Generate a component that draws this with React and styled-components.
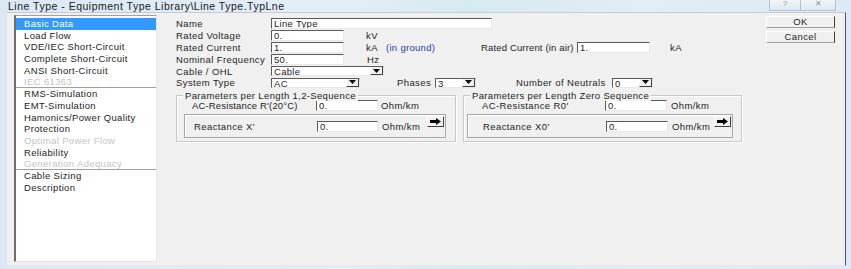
import styled, { createGlobalStyle } from "styled-components";

const GlobalStyle = createGlobalStyle`
  html, body { margin: 0; padding: 0; background: #dfeaf4; }
  body { font-family: "Liberation Sans", Arial, sans-serif; }
`;

const NAV_ITEMS = [
  { label: "Basic Data", selected: true },
  { label: "Load Flow" },
  { label: "VDE/IEC Short-Circuit" },
  { label: "Complete Short-Circuit" },
  { label: "ANSI Short-Circuit" },
  { label: "IEC 61363", disabled: true, divider: true },
  { label: "RMS-Simulation" },
  { label: "EMT-Simulation" },
  { label: "Hamonics/Power Quality" },
  { label: "Protection" },
  { label: "Optimal Power Flow", disabled: true },
  { label: "Reliability" },
  { label: "Generation Adequacy", disabled: true, divider: true },
  { label: "Cable Sizing" },
  { label: "Description" },
];

const App = () => {
  return (
    <>
      <GlobalStyle />
      <Window>
        <TitleBar>
          <Title>Line Type - Equipment Type Library\Line Type.TypLne</Title>
          <CaptionButtons>
            <CaptionButton w={32}>?</CaptionButton>
            <CaptionButton w={36}>✕</CaptionButton>
          </CaptionButtons>
        </TitleBar>
        <Frame>
          <Body>
            <Sidebar>
              {NAV_ITEMS.map((item) => (
                <NavItem
                  key={item.label}
                  selected={item.selected}
                  disabled={item.disabled}
                  divider={item.divider}
                >
                  {item.label}
                </NavItem>
              ))}
            </Sidebar>

            <Form>
              <Row>
                <Label w={95}>Name</Label>
                <Field w={221}>Line Type</Field>
              </Row>
              <Row>
                <Label w={95}>Rated Voltage</Label>
                <Field w={73}>0.</Field>
                <Unit ml={22}>kV</Unit>
              </Row>
              <Row>
                <Label w={95}>Rated Current</Label>
                <Field w={73}>1.</Field>
                <Unit ml={22} w={20}>kA</Unit>
                <Note w={95}>(in ground)</Note>
                <Label w={96} tight>Rated Current (in air)</Label>
                <Field w={73}>1.</Field>
                <Unit ml={20}>kA</Unit>
              </Row>
              <Row>
                <Label w={95}>Nominal Frequency</Label>
                <Field w={73}>50.</Field>
                <Unit ml={23}>Hz</Unit>
              </Row>
              <Row>
                <Label w={95}>Cable / OHL</Label>
                <Combo w={113}>
                  <ComboText>Cable</ComboText>
                  <DropButton>
                    <Caret />
                  </DropButton>
                </Combo>
              </Row>
              <Row>
                <Label w={95}>System Type</Label>
                <Combo w={89}>
                  <ComboText>AC</ComboText>
                  <DropButton>
                    <Caret />
                  </DropButton>
                </Combo>
                <Label w={38} ml={37}>Phases</Label>
                <Combo w={41}>
                  <ComboText>3</ComboText>
                  <DropButton>
                    <Caret />
                  </DropButton>
                </Combo>
                <Label w={96} ml={40}>Number of Neutrals</Label>
                <Combo w={41}>
                  <ComboText>0</ComboText>
                  <DropButton>
                    <Caret />
                  </DropButton>
                </Combo>
              </Row>

              <Groups>
                <Group w={280}>
                  <Legend>Parameters per Length 1,2-Sequence</Legend>
                  <GroupRow pl={15}>
                    <Label w={124} tight>AC-Resistance R'(20°C)</Label>
                    <Field w={62}>0.</Field>
                    <Unit ml={3}>Ohm/km</Unit>
                  </GroupRow>
                  <Inset ml={7} w={262}>
                    <GroupRow pl={9}>
                      <Label w={123}>Reactance X'</Label>
                      <Field w={61}>0.</Field>
                      <Unit ml={4}>Ohm/km</Unit>
                    </GroupRow>
                    <ArrowButton>
                      <ArrowIcon />
                    </ArrowButton>
                  </Inset>
                </Group>
                <Group w={279}>
                  <Legend>Parameters per Length Zero Sequence</Legend>
                  <GroupRow pl={18}>
                    <Label w={123}>AC-Resistance R0'</Label>
                    <Field w={62}>0.</Field>
                    <Unit ml={4}>Ohm/km</Unit>
                  </GroupRow>
                  <Inset ml={3} w={266}>
                    <GroupRow pl={15}>
                      <Label w={123}>Reactance X0'</Label>
                      <Field w={62}>0.</Field>
                      <Unit ml={4}>Ohm/km</Unit>
                    </GroupRow>
                    <ArrowButton>
                      <ArrowIcon />
                    </ArrowButton>
                  </Inset>
                </Group>
              </Groups>
            </Form>

            <Actions>
              <PushButton>OK</PushButton>
              <PushButton>Cancel</PushButton>
            </Actions>
          </Body>
        </Frame>
      </Window>
    </>
  );
};

const ArrowIcon = () => (
  <svg width="11" height="7" viewBox="0 0 11 7">
    <path d="M0 2h6V0l5 3.5L6 7V5H0z" fill="#000" />
  </svg>
);

const Caret = () => (
  <svg width="7" height="4" viewBox="0 0 7 4">
    <path d="M0 0h7L3.5 4z" fill="#000" />
  </svg>
);

const TEXT = "#1e1e1e";

const Window = styled.div`
  width: 851px;
  height: 269px;
  display: flex;
  flex-direction: column;
  background: linear-gradient(90deg, #dbe8f4 0%, #e4eef7 40%, #d6eaf1 55%, #e2edf6 75%, #dde9f4 100%);
  overflow: hidden;
`;

const TitleBar = styled.div`
  height: 12px;
  display: flex;
  align-items: center;
  justify-content: space-between;
  padding-left: 8px;
  padding-right: 15px;
  flex-shrink: 0;
`;

const Title = styled.div`
  font-size: 10.5px;
  letter-spacing: 0.5px;
  color: #202020;
  line-height: 12px;
  white-space: nowrap;
`;

const CaptionButtons = styled.div`
  display: flex;
  align-self: flex-start;
  margin-top: -2px;
`;

const CaptionButton = styled.div`
  width: ${(p) => p.w}px;
  height: 13px;
  box-sizing: border-box;
  border: 1px solid #b3c3d3;
  border-top: none;
  margin-left: -1px;
  background: linear-gradient(#f4f8fb, #dfe8f1);
  color: #8a98a6;
  font-size: 8px;
  line-height: 12px;
  text-align: center;
`;

const Frame = styled.div`
  flex: 1;
  display: flex;
  padding: 0 5px 3px 7px;
`;

const Body = styled.div`
  flex: 1;
  display: flex;
  align-items: flex-start;
  background: #f0f0f0;
  border-top: 1px solid #c3ccd5;
  border-right: 1px solid #4d5863;
  border-bottom: 1px solid #e3e8ee;
`;

const Sidebar = styled.div`
  width: 143px;
  height: 247px;
  box-sizing: border-box;
  margin: 2px 0 0 7px;
  padding-top: 2px;
  background: #fff;
  border-left: 2px solid #6d6d6d;
  border-top: 1px solid #a0a0a0;
  border-right: 1px solid #e6e6e6;
  border-bottom: 1px solid #e6e6e6;
  flex-shrink: 0;
`;

const NavItem = styled.div`
  height: 11.7px;
  box-sizing: border-box;
  padding-left: 8px;
  font-size: 9.5px;
  letter-spacing: 0.35px;
  line-height: 11.7px;
  white-space: nowrap;
  color: ${(p) => (p.selected ? "#fff" : p.disabled ? "#c4c4c4" : TEXT)};
  background: ${(p) => (p.selected ? "#3399ff" : "transparent")};
  border-bottom: ${(p) => (p.divider ? "1px solid #a0a0a0" : "none")};
`;

const Form = styled.div`
  flex: 1;
  margin-left: 19px;
  padding-top: 5px;
  display: flex;
  flex-direction: column;
`;

const Row = styled.div`
  height: 11.8px;
  display: flex;
  align-items: center;
`;

const Label = styled.div`
  width: ${(p) => p.w}px;
  margin-left: ${(p) => p.ml || 0}px;
  flex-shrink: 0;
  font-size: 9.5px;
  letter-spacing: ${(p) => (p.tight ? "0.15px" : "0.4px")};
  color: ${TEXT};
  white-space: nowrap;
`;

const Field = styled.div`
  width: ${(p) => p.w}px;
  height: 11px;
  box-sizing: border-box;
  flex-shrink: 0;
  background: #fff;
  border-top: 1px solid #5a5a5a;
  border-left: 1px solid #5a5a5a;
  border-right: 1px solid #e8e8e8;
  border-bottom: 1px solid #e8e8e8;
  padding-left: 2px;
  font-size: 9.5px;
  line-height: 9px;
  letter-spacing: 0.3px;
  color: ${TEXT};
  white-space: nowrap;
  overflow: hidden;
`;

const Unit = styled.div`
  margin-left: ${(p) => p.ml || 0}px;
  width: ${(p) => (p.w ? `${p.w}px` : "auto")};
  flex-shrink: 0;
  font-size: 9.5px;
  letter-spacing: 0.4px;
  color: ${TEXT};
  white-space: nowrap;
`;

const Note = styled.div`
  width: ${(p) => p.w}px;
  flex-shrink: 0;
  font-size: 9.5px;
  letter-spacing: 0.3px;
  color: #2a3c9c;
  white-space: nowrap;
`;

const Combo = styled.div`
  width: ${(p) => p.w}px;
  height: 10px;
  box-sizing: border-box;
  flex-shrink: 0;
  display: flex;
  background: #fff;
  border-top: 1px solid #5a5a5a;
  border-left: 1px solid #5a5a5a;
  border-right: 1px solid #e8e8e8;
  border-bottom: 1px solid #e8e8e8;
`;

const ComboText = styled.div`
  flex: 1;
  padding-left: 2px;
  font-size: 9.5px;
  line-height: 9px;
  letter-spacing: 0.3px;
  color: ${TEXT};
`;

const DropButton = styled.div`
  width: 13px;
  box-sizing: border-box;
  display: flex;
  align-items: center;
  justify-content: center;
  background: #f0f0f0;
  border-right: 1px solid #404040;
  border-bottom: 1px solid #404040;
  border-left: 1px solid #fff;
`;

const Groups = styled.div`
  display: flex;
  gap: 7px;
  margin-top: 6px;
`;

const Group = styled.div`
  position: relative;
  width: ${(p) => p.w}px;
  height: 47px;
  box-sizing: border-box;
  border: 1px solid #c8c8c8;
  box-shadow: inset 1px 1px 0 #fff, 1px 1px 0 #fff;
  padding-top: 4px;
  display: flex;
  flex-direction: column;
`;

const Legend = styled.div`
  position: absolute;
  top: -6px;
  left: 6px;
  padding: 0 2px;
  background: #f0f0f0;
  font-size: 9.5px;
  letter-spacing: 0.35px;
  line-height: 11px;
  color: ${TEXT};
  white-space: nowrap;
`;

const GroupRow = styled.div`
  height: 12px;
  display: flex;
  align-items: center;
  padding-left: ${(p) => p.pl}px;
`;

const Inset = styled.div`
  position: relative;
  width: ${(p) => p.w}px;
  margin-left: ${(p) => p.ml}px;
  margin-top: 2px;
  height: 24px;
  box-sizing: border-box;
  border: 1px solid #a8a8a8;
  box-shadow: inset 1px 1px 0 #fff;
  display: flex;
  align-items: center;
  padding-top: 1px;
`;

const ArrowButton = styled.div`
  position: absolute;
  top: 1px;
  right: 1px;
  width: 17px;
  height: 11px;
  box-sizing: border-box;
  display: flex;
  align-items: center;
  justify-content: center;
  background: #f0f0f0;
  border-top: 1px solid #fff;
  border-left: 1px solid #fff;
  border-right: 1px solid #404040;
  border-bottom: 1px solid #404040;
`;

const Actions = styled.div`
  width: 69px;
  margin: 3px 10px 0 0;
  display: flex;
  flex-direction: column;
  gap: 3px;
  flex-shrink: 0;
`;

const PushButton = styled.div`
  height: 12px;
  box-sizing: border-box;
  border-top: 1px solid #fff;
  border-left: 1px solid #fff;
  border-right: 1px solid #404040;
  border-bottom: 1px solid #a0a0a0;
  background: #f0f0f0;
  font-size: 9.5px;
  letter-spacing: 0.4px;
  line-height: 10px;
  text-align: center;
  color: ${TEXT};
`;

export default App;
